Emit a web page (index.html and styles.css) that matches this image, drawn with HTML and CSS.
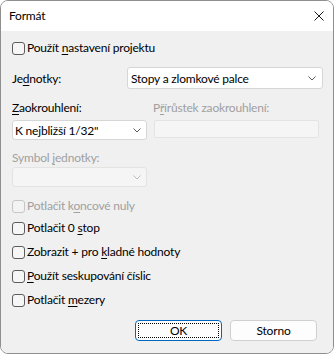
FILE: index.html
```html
<!DOCTYPE html>
<html lang="cs">
<head>
    <meta charset="UTF-8">
    <title>Formát</title>
    <link rel="stylesheet" href="styles.css">
</head>
<body>

    <div class="window">
        <div class="titlebar">
            <span class="title">Formát</span>
            <svg class="close" width="10" height="10" viewBox="0 0 10 10">
                <path d="M0.5 0.5 L9.5 9.5 M9.5 0.5 L0.5 9.5" stroke="#1a1a1a" stroke-width="1" fill="none"/>
            </svg>
        </div>

        <div class="content">
            <div class="check first">
                <span class="box"></span><span>Použít <u>n</u>astavení projektu</span>
            </div>

            <div class="units-row">
                <span class="units-label">Je<u>d</u>notky:</span>
                <div class="combo wide">
                    <span>Stopy a zlomkové palce</span>
                    <svg class="chevron" width="8" height="5" viewBox="0 0 8 5"><path d="M0.5 0.5 L4 4 L7.5 0.5" stroke="#5a5a5a" fill="none"/></svg>
                </div>
            </div>

            <div class="round-grid">
                <div class="col left">
                    <span class="field-label"><u>Z</u>aokrouhlení:</span>
                    <div class="combo small">
                        <span>K nejbližší 1/32"</span>
                        <svg class="chevron" width="8" height="5" viewBox="0 0 8 5"><path d="M0.5 0.5 L4 4 L7.5 0.5" stroke="#5a5a5a" fill="none"/></svg>
                    </div>
                </div>
                <div class="col right">
                    <span class="field-label disabled">P<u>ř</u>írůstek zaokrouhlení:</span>
                    <div class="textbox disabled-box"></div>
                </div>
            </div>

            <div class="symbol">
                <span class="field-label disabled">Symbol <u>j</u>ednotky:</span>
                <div class="combo small disabled-box">
                    <span></span>
                    <svg class="chevron" width="8" height="5" viewBox="0 0 8 5"><path d="M0.5 0.5 L4 4 L7.5 0.5" stroke="#bdbdbd" fill="none"/></svg>
                </div>
            </div>

            <div class="check disabled koncove">
                <span class="box"></span><span>Potlačit k<u>o</u>ncové nuly</span>
            </div>
            <div class="check stop">
                <span class="box"></span><span>Potlačit 0 <u>s</u>top</span>
            </div>
            <div class="check">
                <span class="box"></span><span>Zobrazit + pro <u>k</u>ladné hodnoty</span>
            </div>
            <div class="check">
                <span class="box"></span><span><u>P</u>oužít seskupování číslic</span>
            </div>
            <div class="check">
                <span class="box"></span><span>Potlačit <u>m</u>ezery</span>
            </div>

            <div class="buttons">
                <div class="btn default"><span class="focus">OK</span></div>
                <div class="btn">Storno</div>
            </div>
        </div>
    </div>

</body>
</html>
```

FILE: styles.css
```css
body {
    margin: 0;
    background-color: #ffffff;
    font-family: Lato, "Noto Sans", sans-serif;
    font-size: 12px;
    letter-spacing: -0.2px;
    color: #000;
}
.window {
    width: 334px;
    height: 354px;
    box-sizing: border-box;
    border: 1px solid #8f8f8f;
    border-radius: 8px;
    overflow: hidden;
    display: flex;
    flex-direction: column;
}
.titlebar {
    height: 30px;
    flex: none;
    background-color: #ffffff;
    display: flex;
    align-items: center;
    justify-content: space-between;
    padding: 0 9px 0 8px;
}
.title {
    line-height: 16px;
}
.content {
    flex: 1;
    background-color: #f0f0f0;
    padding: 9px 10px 0 11px;
}
u {
    text-decoration-thickness: 1px;
    text-underline-offset: 2px;
}
.check {
    display: flex;
    align-items: center;
    height: 16px;
    line-height: 16px;
    margin-top: 8px;
    white-space: nowrap;
}
.check.first {
    margin-top: 0;
}
.check.koncove {
    margin-top: 11px;
}
.check.stop {
    margin-top: 6px;
}
.box {
    width: 13px;
    height: 13px;
    box-sizing: border-box;
    border: 1px solid #5c5c5c;
    border-radius: 3px;
    background-color: #f6f6f6;
    margin-right: 2px;
    flex: none;
}
.check.disabled {
    color: #a0a0a0;
}
.check.disabled .box {
    border-color: #c6c6c6;
    background-color: #f3f3f3;
}
.units-row {
    display: flex;
    align-items: center;
    margin-top: 11px;
}
.units-label {
    width: 115px;
    flex: none;
}
.combo {
    box-sizing: border-box;
    background-color: #ffffff;
    border: 1px solid #d6d6d6;
    border-radius: 3px;
    display: flex;
    align-items: center;
    justify-content: space-between;
    white-space: nowrap;
}
.combo.wide {
    flex: 1;
    height: 22px;
    padding: 0 6px 0 3px;
}
.combo.small {
    width: 135px;
    height: 20px;
    padding: 0 5px 0 2px;
}
.chevron {
    flex: none;
}
.round-grid {
    display: flex;
    margin-top: 11px;
}
.col {
    display: flex;
    flex-direction: column;
}
.col.left {
    width: 135px;
    flex: none;
}
.col.right {
    flex: 1;
    margin-left: 6px;
    margin-right: 4px;
}
.field-label {
    line-height: 16px;
    height: 16px;
    white-space: nowrap;
}
.field-label.disabled {
    color: #a0a0a0;
}
.col .combo, .col .textbox {
    margin-top: 4px;
}
.textbox {
    height: 18px;
    box-sizing: border-box;
    margin-left: 1px;
    border: 1px solid #dcdcdc;
    border-radius: 2px;
}
.disabled-box {
    background-color: #f5f5f5;
    border-color: #e3e3e3;
}
.symbol {
    margin-top: 10px;
    display: flex;
    flex-direction: column;
}
.symbol .combo {
    margin-top: 1px;
}
.buttons {
    display: flex;
    justify-content: flex-end;
    margin-top: 12px;
    margin-right: 6px;
}
.btn {
    width: 87px;
    height: 21px;
    box-sizing: border-box;
    border: 1px solid #d0d0d0;
    border-radius: 4px;
    background-color: #fdfdfd;
    display: flex;
    align-items: center;
    justify-content: center;
    margin-left: 8px;
}
.btn.default {
    border-color: #0067c0;
    padding: 2px;
}
.focus {
    flex: 1;
    align-self: stretch;
    border: 1px dotted #000;
    display: flex;
    align-items: center;
    justify-content: center;
}
```
